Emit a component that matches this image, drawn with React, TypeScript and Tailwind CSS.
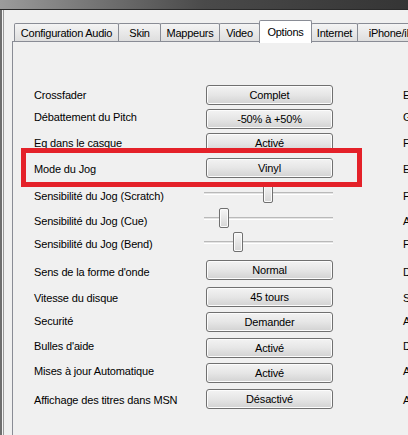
import React from "react";

type Row = {
  label: string;
  kind: "button" | "slider";
  value: string;
  pos?: number;
  mt: string;
  labelCls: string;
  right: string;
};

const rows: Row[] = [
  { label: "Crossfader", kind: "button", value: "Complet", mt: "mt-0", labelCls: "pt-[1px]", right: "Enregistrement" },
  { label: "Débattement du Pitch", kind: "button", value: "-50% à +50%", mt: "mt-[4px]", labelCls: "pb-[3px]", right: "Gain" },
  { label: "Eq dans le casque", kind: "button", value: "Activé", mt: "mt-[4px]", labelCls: "pt-0", right: "Fondu" },
  { label: "Mode du Jog", kind: "button", value: "Vinyl", mt: "mt-[5px]", labelCls: "pt-[2px]", right: "Effets" },
  { label: "Sensibilité du Jog (Scratch)", kind: "slider", value: "", pos: 59, mt: "mt-[5px]", labelCls: "pt-[6px]", right: "Filtre" },
  { label: "Sensibilité du Jog (Cue)", kind: "slider", value: "", pos: 15, mt: "mt-[5px]", labelCls: "pt-[6px]", right: "Auto" },
  { label: "Sensibilité du Jog (Bend)", kind: "slider", value: "", pos: 29, mt: "mt-[4px]", labelCls: "pt-[5px]", right: "Fréquence" },
  { label: "Sens de la forme d'onde", kind: "button", value: "Normal", mt: "mt-[8px]", labelCls: "pt-[4px]", right: "Durée" },
  { label: "Vitesse du disque", kind: "button", value: "45 tours", mt: "mt-[7px]", labelCls: "pt-[3px]", right: "Son" },
  { label: "Securité", kind: "button", value: "Demander", mt: "mt-[5px]", labelCls: "pb-[2px]", right: "Affichage" },
  { label: "Bulles d'aide", kind: "button", value: "Activé", mt: "mt-[6px]", labelCls: "pb-[3px]", right: "Démarrage" },
  { label: "Mises à jour Automatique", kind: "button", value: "Activé", mt: "mt-[5px]", labelCls: "pb-[3px]", right: "Aide" },
  { label: "Affichage des titres dans MSN", kind: "button", value: "Désactivé", mt: "mt-[6px]", labelCls: "pt-[2px]", right: "Audio" },
];

const tabs = [
  { name: "Configuration Audio", w: "w-[105px]" },
  { name: "Skin", w: "w-[43px]" },
  { name: "Mappeurs", w: "w-[60px]" },
  { name: "Video", w: "w-[41px]" },
  { name: "Options", w: "w-[53px]", active: true },
  { name: "Internet", w: "w-[47px]" },
  { name: "iPhone/iPod", w: "w-[80px]" },
];

const WinButton = ({ text }: { text: string }) => (
  <div className="w-[127px] h-[20px] rounded-[3px] border border-[#707070] bg-gradient-to-b from-[#f3f3f3] via-[#e6e6e6] to-[#d2d2d2] shadow-[inset_0_0_0_1px_#fcfcfc] flex items-center justify-center text-black">
    {text}
  </div>
);

const Slider = ({ pos }: { pos: number }) => (
  <div className="relative -ml-[2px] w-[129px] h-[20px] flex items-center">
    <div className="w-full h-[3px] border-t border-[#b9b9b9] border-b border-b-white bg-[#e4e4e4]" />
    <div
      className="absolute top-0 w-[10px] h-[20px] rounded-[2px] border border-[#707070] bg-gradient-to-b from-[#f6f6f6] to-[#d6d6d6] shadow-[inset_0_0_0_1px_#fbfbfb]"
      style={{ left: pos }}
    />
  </div>
);

export default function App() {
  return (
    <div
      className="relative w-[408px] h-[435px] overflow-hidden bg-[#f0f0f0] flex flex-col text-[11px] tracking-[-0.15px] text-black"
      style={{ fontFamily: '"Liberation Sans", Arial, sans-serif' }}
    >
      {/* window title blur */}
      <div className="h-[9px] shrink-0 bg-gradient-to-r from-[#9c9c9c] via-[#4a4a4a] to-[#353535]" />
      <div className="h-px shrink-0 bg-[#2a2a2a]" />

      <div className="flex-1 flex min-w-0">
        <div className="w-[2px] shrink-0 bg-[#6e6e6e]" />
        <div className="w-px shrink-0 bg-[#f4f4f4]" />
        <div className="w-px shrink-0 bg-[#9a9a9a]" />

        <div className="flex-1 min-w-0 flex flex-col pl-[8px] pt-[11px]">
          {/* tabs */}
          <div className="relative z-10 flex items-end h-[20px] pl-[2px] tracking-[-0.25px]">
            {tabs.map((t) =>
              t.active ? (
                <div
                  key={t.name}
                  className={`${t.w} shrink-0 h-[23px] -mb-[2px] -mr-px border border-b-0 border-[#898c95] rounded-t-[2px] bg-white flex items-start justify-center pt-[3px] whitespace-nowrap`}
                >
                  {t.name}
                </div>
              ) : (
                <div
                  key={t.name}
                  className={`${t.w} shrink-0 h-[18px] -mr-px border border-b-0 border-[#898c95] rounded-t-[2px] bg-gradient-to-b from-[#f4f4f4] to-[#dedede] flex items-center justify-center pt-px whitespace-nowrap overflow-hidden`}
                >
                  {t.name}
                </div>
              )
            )}
          </div>

          {/* panel */}
          <div className="flex-1 border-t border-l border-[#898c95] pl-[21px] pt-[43px]">
            {rows.map((r) => (
              <div key={r.label} className={`${r.mt} flex items-center h-[20px] whitespace-nowrap`}>
                <div className={`w-[172px] shrink-0 ${r.labelCls}`}>{r.label}</div>
                <div className="w-[127px] shrink-0">
                  {r.kind === "button" ? <WinButton text={r.value} /> : <Slider pos={r.pos ?? 0} />}
                </div>
                <div className="w-[70px] shrink-0" />
                <div className={`shrink-0 ${r.labelCls}`}>{r.right}</div>
              </div>
            ))}
          </div>
        </div>
      </div>

      {/* red highlight drawn over the screenshot */}
      <div className="absolute left-[21px] top-[148px] w-[341px] h-[39px] border-[5px] border-[#e42129]" />
    </div>
  );
}
